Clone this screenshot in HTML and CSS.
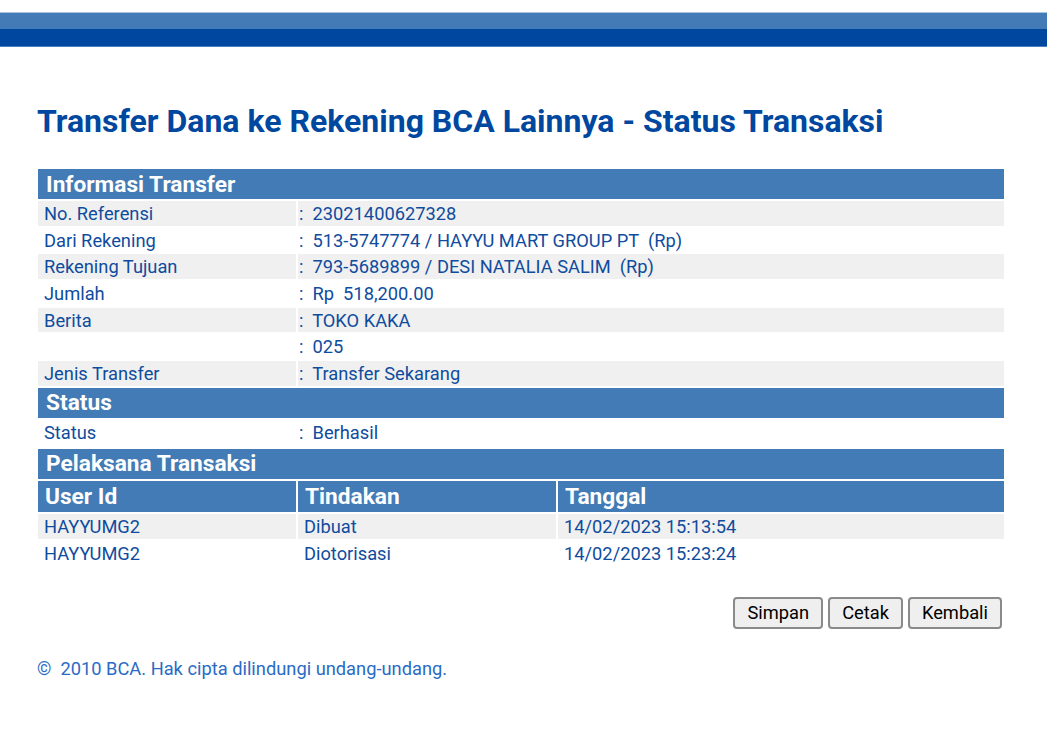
FILE: index.html
```html
<!DOCTYPE html>
<html lang="id">

<head>
    <meta charset="UTF-8">
    <title>Transfer Dana ke Rekening BCA Lainnya - Status Transaksi</title>
    <link rel="stylesheet" href="styles.css">
</head>

<body>

    <!-- Top Bar -->
    <div class="topbar">
        <div class="topbar-light"></div>
        <div class="topbar-dark"></div>
    </div>

    <div class="content">
        <h1 class="title">Transfer Dana ke Rekening BCA Lainnya - Status Transaksi</h1>

        <table class="info">
            <colgroup>
                <col class="col-label">
                <col>
            </colgroup>
            <tr>
                <td class="head" colspan="2">Informasi Transfer</td>
            </tr>
            <tr class="odd">
                <td class="label">No. Referensi</td>
                <td class="value">:&nbsp; 23021400627328</td>
            </tr>
            <tr class="even">
                <td class="label">Dari Rekening</td>
                <td class="value">:&nbsp; 513-5747774 / HAYYU MART GROUP PT &nbsp;(Rp)</td>
            </tr>
            <tr class="odd">
                <td class="label">Rekening Tujuan</td>
                <td class="value">:&nbsp; 793-5689899 / DESI NATALIA SALIM &nbsp;(Rp)</td>
            </tr>
            <tr class="even">
                <td class="label">Jumlah</td>
                <td class="value">:&nbsp; Rp &nbsp;518,200.00</td>
            </tr>
            <tr class="odd">
                <td class="label">Berita</td>
                <td class="value">:&nbsp; TOKO KAKA</td>
            </tr>
            <tr class="even">
                <td class="label"></td>
                <td class="value">:&nbsp; 025</td>
            </tr>
            <tr class="odd">
                <td class="label">Jenis Transfer</td>
                <td class="value">:&nbsp; Transfer Sekarang</td>
            </tr>
            <tr>
                <td class="head" colspan="2">Status</td>
            </tr>
            <tr class="even">
                <td class="label">Status</td>
                <td class="value">:&nbsp; Berhasil</td>
            </tr>
        </table>

        <table class="info">
            <colgroup>
                <col class="col-label">
                <col class="col-label">
                <col>
            </colgroup>
            <tr>
                <td class="head" colspan="3">Pelaksana Transaksi</td>
            </tr>
            <tr class="colhead">
                <td class="head">User Id</td>
                <td class="head">Tindakan</td>
                <td class="head">Tanggal</td>
            </tr>
            <tr class="odd">
                <td class="cell">HAYYUMG2</td>
                <td class="cell">Dibuat</td>
                <td class="cell">14/02/2023 15:13:54</td>
            </tr>
            <tr class="even">
                <td class="cell">HAYYUMG2</td>
                <td class="cell">Diotorisasi</td>
                <td class="cell">14/02/2023 15:23:24</td>
            </tr>
        </table>

        <div class="actions">
            <button class="btn">Simpan</button>
            <button class="btn">Cetak</button>
            <button class="btn">Kembali</button>
        </div>

        <p class="footer">©&nbsp; 2010 BCA. Hak cipta dilindungi undang-undang.</p>
    </div>

</body>

</html>
```

FILE: styles.css
```css
body {
    margin: 0;
    font-family: Roboto, 'Liberation Sans', sans-serif;
    background: #fff;
}

.topbar {
    margin-top: 12px;
    border-top: 1px solid #a9c3df;
    border-bottom: 1px solid #4a7fc0;
}

.topbar-light {
    height: 16px;
    background: #427bb5;
}

.topbar-dark {
    height: 17px;
    background: #0047a0;
}

.content {
    padding: 0 43px 0 36px;
}

.title {
    margin: 55px 0 27px 1px;
    font-size: 32px;
    font-weight: bold;
    color: #0047a0;
}

.info {
    width: 970px;
    border-collapse: separate;
    border-spacing: 2px;
    font-size: 18.3px;
    color: #0f4c9e;
    table-layout: fixed;
}

.col-label {
    width: 258px;
}

.info td {
    box-sizing: border-box;
    padding: 0 0 0 6px;
    white-space: nowrap;
}

.info .head {
    background: #427bb5;
    color: #fff;
    font-weight: bold;
    font-size: 22.7px;
    height: 30px;
    padding-left: 8px;
}

.colhead .head {
    height: 31px;
    padding-left: 7px;
}

.label {
    height: 24.7px;
}

.info .value {
    padding-left: 1px;
}

.odd td {
    background: #f0f0f0;
}

.even td {
    background: #fff;
}

.cell {
    height: 25px;
}

.actions {
    display: flex;
    justify-content: flex-end;
    gap: 5px;
    margin: 29px 2px 0 0;
}

.btn {
    font-family: Roboto, 'Liberation Sans', sans-serif;
    font-size: 18.3px;
    color: #000;
    background: #efefef;
    border: 2px solid #8a8a8a;
    border-radius: 4px;
    padding: 3px 12px;
    height: 32px;
}

.footer {
    margin: 29px 0 0 1px;
    font-size: 18.3px;
    color: #2a6bc5;
}
```
